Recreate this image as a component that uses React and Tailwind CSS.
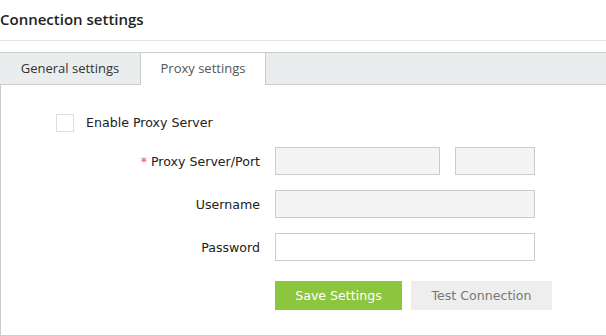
import React from "react";

export default function App() {
  const body = { fontFamily: '"DejaVu Sans", Verdana, sans-serif' };
  const head = { fontFamily: '"Open Sans", sans-serif' };
  return (
    <div className="w-[606px] h-[336px] bg-white overflow-hidden">
      <div className="h-[41px] border-b border-[#e5e5e5] flex items-center" style={head}>
        <h1 className="text-[15px] font-semibold text-[#222] leading-none -mt-[1px]">Connection settings</h1>
      </div>
      <div className="mt-[11px] h-[33px] bg-[#e9eded] border-t border-b border-[#cccccc] flex" style={head}>
        <div className="w-[140px] flex items-center justify-center text-[13px] text-[#333]">General settings</div>
        <div className="w-[126px] -mb-[1px] bg-white border-l border-r border-[#cccccc] flex items-center justify-center text-[13px] text-[#555]">Proxy settings</div>
      </div>
      <div className="h-[251px] border-l border-b border-[#cccccc] pt-[29px]" style={body}>
        <div className="flex items-center pl-[55px] h-[18px]">
          <div className="w-[18px] h-[18px] border border-[#dddddd] bg-white" />
          <span className="ml-[12px] text-[12.6px] text-[#222] pt-[1px]">Enable Proxy Server</span>
        </div>
        <div className="mt-[15px] flex items-center h-[28px]">
          <label className="w-[259px] text-right text-[12.6px] text-[#222] pt-[3px]">
            <span className="text-[#e5534b] mr-[4px]">*</span>Proxy Server/Port
          </label>
          <div className="ml-[15px] w-[165px] h-[28px] border border-[#cccccc] bg-[#f4f4f4]" />
          <div className="ml-[15px] w-[80px] h-[28px] border border-[#cccccc] bg-[#f4f4f4]" />
        </div>
        <div className="mt-[15px] flex items-center h-[28px]">
          <label className="w-[259px] text-right text-[12.6px] text-[#222] pt-[3px]">Username</label>
          <div className="ml-[15px] w-[260px] h-[28px] border border-[#cccccc] bg-[#f4f4f4]" />
        </div>
        <div className="mt-[15px] flex items-center h-[28px]">
          <label className="w-[259px] text-right text-[12.6px] text-[#222] pt-[3px]">Password</label>
          <div className="ml-[15px] w-[260px] h-[28px] border border-[#cccccc] bg-white" />
        </div>
        <div className="mt-[20px] flex pl-[274px] gap-[9px]">
          <button className="w-[127px] h-[29px] bg-[#8cc63f] text-white text-[12.6px] pt-[2px]">Save Settings</button>
          <button className="w-[141px] h-[29px] bg-[#eeeeee] text-[#777] text-[12.6px] pt-[2px]">Test Connection</button>
        </div>
      </div>
    </div>
  );
}
